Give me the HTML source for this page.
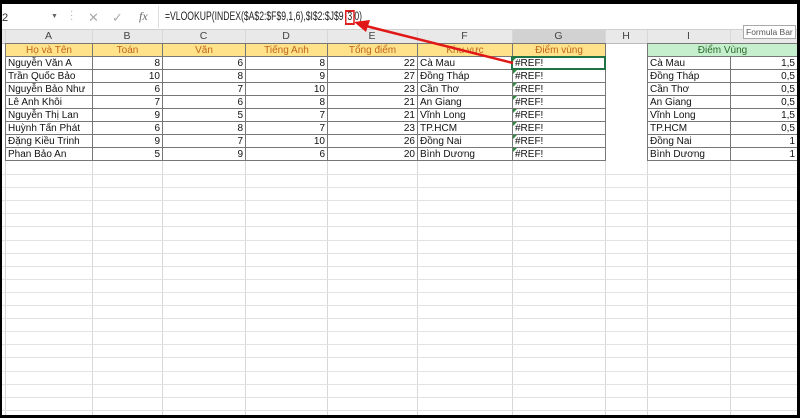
<!DOCTYPE html>
<html><head><meta charset="utf-8"><style>
body{margin:0;width:800px;height:418px;overflow:hidden;background:#000;font-family:"Liberation Sans",Arial,sans-serif;position:relative}
#app{position:absolute;left:2px;top:4px;width:795px;height:411px;background:#fff;overflow:hidden}
.a{position:absolute}
.c{position:absolute;font-size:10px;line-height:13px;height:13px;box-sizing:border-box;padding:0 2px;white-space:nowrap;overflow:hidden;color:#111}
.r{text-align:right}
.hdr{text-align:center;color:#444;font-size:10.5px}
</style></head><body>
<div id="app">
<div class="a" style="left:0;top:0;width:795px;height:25px;background:#fff"></div>
<div class="a" style="left:0;top:8px;font-size:11px;color:#333">2</div>
<div class="a" style="left:49px;top:9px;font-size:7px;color:#666">▼</div>
<div class="a" style="left:68px;top:6px;font-size:10px;color:#aaa;line-height:4px">·<br>·<br>·</div>
<div class="a" style="left:86px;top:6px;font-size:13px;color:#aaa">✕</div>
<div class="a" style="left:110px;top:6px;font-size:13px;color:#aaa">✓</div>
<div class="a" style="left:137px;top:5px;font-size:12px;color:#666;font-family:'Liberation Serif',serif;font-style:italic">fx</div>
<div class="a" style="left:156px;top:2px;width:640px;height:22px;border-left:1px solid #ddd"></div>
<div class="a" style="left:163px;top:6px;font-size:11.5px;color:#222;transform:scaleX(0.75);transform-origin:0 0;white-space:nowrap">=VLOOKUP(INDEX($A$2:$F$9,1,6),$I$2:$J$9<span style="display:inline-block;border:2px solid #e02020;padding:0 1px;line-height:10px;height:11px;margin-left:2px">3</span>0)</div>
<div class="a" style="left:741px;top:21px;font-size:8.5px;color:#555;border:1px solid #aaa;background:#fff;padding:1px 2px;z-index:5">Formula Bar</div>
<div class="a" style="left:0;top:25px;width:795px;height:14px;background:#e9e9e9;border-top:1px solid #d0d0d0"></div>
<div class="a" style="left:0;top:39px;width:795px;height:1px;background:#bbb"></div>
<div class="a" style="left:510px;top:26px;width:93px;height:13px;background:#d2d2d2;border-bottom:2px solid #217346"></div>
<svg class="a" style="left:0;top:0" width="795" height="411">
<g stroke="#d8d8d8" stroke-width="1">
<line x1="3.5" y1="26" x2="3.5" y2="411"/><line x1="90.5" y1="26" x2="90.5" y2="411"/><line x1="160.5" y1="26" x2="160.5" y2="411"/><line x1="243.5" y1="26" x2="243.5" y2="411"/><line x1="325.5" y1="26" x2="325.5" y2="411"/><line x1="415.5" y1="26" x2="415.5" y2="411"/><line x1="510.5" y1="26" x2="510.5" y2="411"/><line x1="603.5" y1="26" x2="603.5" y2="411"/><line x1="645.5" y1="26" x2="645.5" y2="411"/><line x1="728.5" y1="26" x2="728.5" y2="411"/>
</g>
<g stroke="#e2e2e2" stroke-width="1" id="hl"></g>
</svg>
<div id="grid"></div>
</div>
<svg class="a" style="left:0;top:0;z-index:10" width="800" height="418">
<line x1="513" y1="63" x2="366" y2="26" stroke="#e01818" stroke-width="2.5"/>
<polygon points="354,22 370,20 366,32" fill="#e01818"/>
</svg>
<script>
var cols=[3,90,160,243,325,415,510,603,645,728,795];
var letters=["A","B","C","D","E","F","G","H","I","J"];
var html="";
var T=39,H=13;
for(var i=0;i<10;i++){html+='<div class="c hdr" style="left:'+cols[i]+'px;top:26px;width:'+(cols[i+1]-cols[i])+'px">'+letters[i]+'</div>';}
var hl="";
for(var k=1;k<30;k++){var y=Math.round(T+k*13.1)+.5;if(y<411&&k>9)hl+='<line x1="0" y1="'+y+'" x2="795" y2="'+y+'"/>';}
document.getElementById("hl").innerHTML=hl;
var heads=["Họ và Tên","Toán","Văn","Tiếng Anh","Tổng điểm","Khu vực","Điểm vùng"];
for(var i=0;i<7;i++){html+='<div class="c" style="left:'+cols[i]+'px;top:'+T+'px;width:'+(cols[i+1]-cols[i]+1)+'px;height:14px;background:#ffe28a;color:#c0651a;text-align:center;border:1px solid #777">'+heads[i]+'</div>';}
html+='<div class="c" style="left:645px;top:'+T+'px;width:151px;height:14px;background:#c6efce;color:#2a6b2a;text-align:center;border:1px solid #777">Điểm Vùng</div>';
var d=[["Nguyễn Văn A",8,6,8,22,"Cà Mau"],["Trần Quốc Bảo",10,8,9,27,"Đồng Tháp"],["Nguyễn Bảo Như",6,7,10,23,"Cần Thơ"],["Lê Anh Khôi",7,6,8,21,"An Giang"],["Nguyễn Thị Lan",9,5,7,21,"Vĩnh Long"],["Huỳnh Tấn Phát",6,8,7,23,"TP.HCM"],["Đặng Kiều Trinh",9,7,10,26,"Đồng Nai"],["Phan Bảo An",5,9,6,20,"Bình Dương"]];
var v=["1,5","0,5","0,5","0,5","1,5","0,5","1","1"];
for(var r=0;r<8;r++){var y=T+(r+1)*H;
 for(var i=0;i<7;i++){var t=i<6?d[r][i]:"#REF!";var cl=(i>=1&&i<=4)?"c r":"c";
  html+='<div class="'+cl+'" style="left:'+cols[i]+'px;top:'+y+'px;width:'+(cols[i+1]-cols[i]+1)+'px;height:14px;border:1px solid #777">'+t+'</div>';}
 html+='<div class="c" style="left:645px;top:'+y+'px;width:84px;height:14px;border:1px solid #777">'+d[r][5]+'</div>';
 html+='<div class="c r" style="left:728px;top:'+y+'px;width:68px;height:14px;border:1px solid #777">'+v[r]+'</div>';
 html+='<div class="a" style="left:511px;top:'+(y+1)+'px;width:0;height:0;border-top:4px solid #2e8b3e;border-right:4px solid transparent"></div>';
}
html+='<div class="a" style="left:509px;top:'+(T+H)+'px;width:95px;height:14px;border:2px solid #217346;box-sizing:border-box"></div>';
document.getElementById("grid").innerHTML=html;
</script>
</body></html>
